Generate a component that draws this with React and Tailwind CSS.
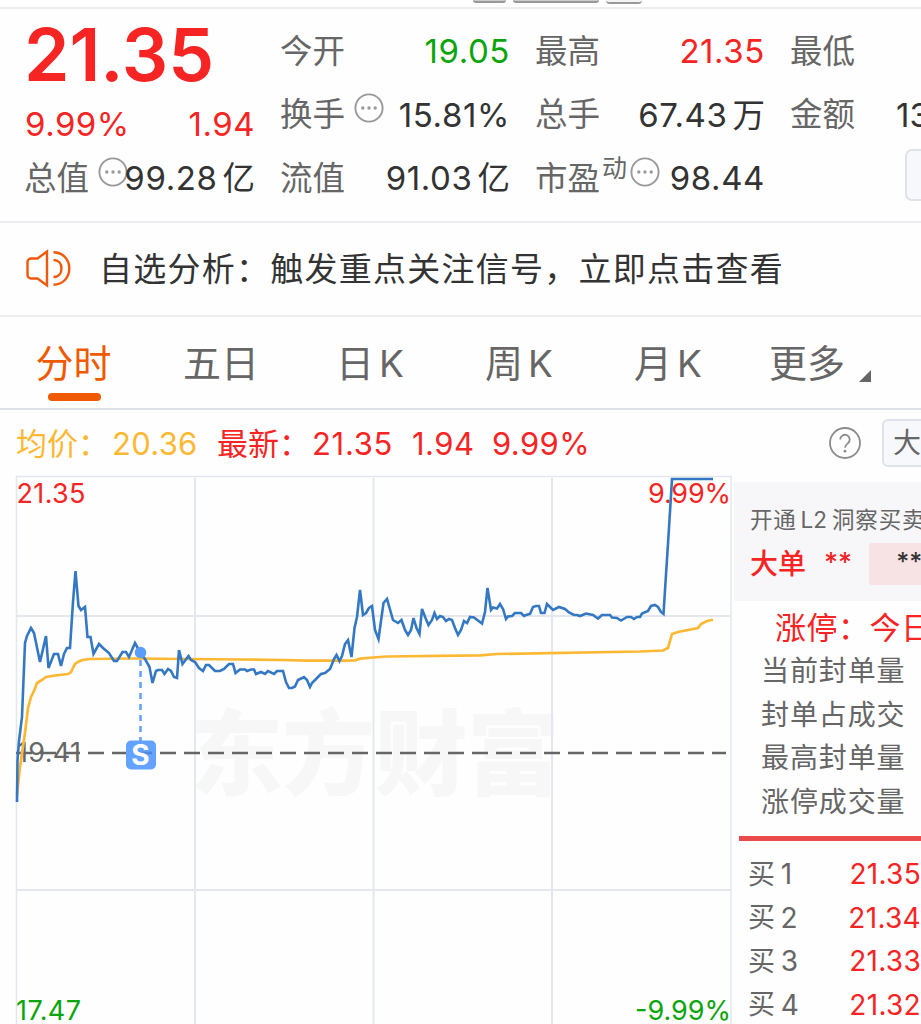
import React from "react";

const priceLine =
  "17,802 17.5,760 19,741 22,717 25,643 27,636 31,628 34,633 40,662 46,636 48.5,668 54,654 58,654 61,666 64,654 67,648 70,648 73,602 75.5,571 78.5,606 81,610 85,607 87.5,637 90.5,637 93.5,654 99,644 103,648 109,653 114,661 117,661 122.5,652 126,652 129,657 135,643 140.5,653 145,659 149.5,667 152.5,683 156,671 158,670 162,670 164.5,674 168,669 171,671 174,677 177,678 179,650 182.5,664 188.5,656 191,660 195,662 199,668 203,671 206,665 209,665 215,671 220,671 224,669 229,664 233,664 235.5,673 240,669.5 245,669.5 247,671 251,669.5 254,669.5 256,674 261,672 265,674 268,671 274,674 277,671 283,671 286,682 289,688 292,688 295,686.5 298,680 304,677 307,680 310,687 312,683 321,674 325,673 330,669 334,659 336.5,655 339.5,661 342,656 345,644 348,640 351.5,657 354.5,628 357,617 360,590 363,615 366,613 369,608 372,606 375,630 378.5,639 383.5,603 387,599 393,620 398,623 401.5,620 405,630 408,635 411,630 413.5,618 416.5,628 419.5,634 422,609 425.5,618 428.5,625 432,620 434.5,613 437,619 440,616 443,617 446,621 449,619 452,620 455,628 458,635 461,630 464,621 467,623 470,617 474,617.5 482,623.5 485,612 487.5,588 491,610 493,607.5 497,608.5 500,604 503,609 506,619 508,616.5 512,616 515,613 521,613 524,616 526,615 530,614 533,607 536,606 539,606 541,613 544.5,613 547,604 553,610 559,607 565,609 569,612.5 574,615 577,615 580,616 586,613.5 593,615 598,618.5 602,615 610,615 612,617.5 617,618 621,620.5 627,617 631,617 634,619 637,617 640,617 642,613.5 648,611 651,606 655,605 658,607 661,612 663.5,614 665,590 668.5,536 672,479 713,479";

const averageLine =
  "17,795 18,785 20,767 25,733 28,708 31,697 34,691 37,683 41,680.5 46,677 55,675.5 68,674 71,672 75,664 78,662 82,660 90,659 133,658.5 240,659.5 283,660 307,660.7 345,660.7 355,660.3 360,658.7 373,657.5 387,656.5 480,655.3 497,654 640,651.5 663,650.5 668,648 672,634 678,632 698,628 701,624 707,621 713,619.7";

function MoreDots({ className = "" }) {
  return (
    <svg viewBox="0 0 30 30" className={`size-[30px] shrink-0 ${className}`}>
      <circle cx="15" cy="15" r="13.6" fill="none" stroke="#999" strokeWidth="1.9" />
      <circle cx="8.8" cy="15" r="1.7" fill="#999" />
      <circle cx="15" cy="15" r="1.7" fill="#999" />
      <circle cx="21.2" cy="15" r="1.7" fill="#999" />
    </svg>
  );
}

function Stat({ label, value, mark, unit, className = "text-[#333]", extra }) {
  return (
    <div className="flex h-[63.5px] items-center whitespace-nowrap leading-none">
      <span className="-ml-px text-[32.5px] text-[#666]">{label}</span>
      {mark && <span className="ml-[2px] mb-5 text-[25px] text-[#666]">{mark}</span>}
      {extra}
      {value && (
        <span className={`-mr-px ml-auto text-[33px] tracking-[0.6px] ${className}`}>
          {value}
          {unit && <span className="ml-[5px] text-[32.500px] tracking-normal">{unit}</span>}
        </span>
      )}
    </div>
  );
}

function Summary() {
  return (
    <section className="flex h-[214px] shrink-0 gap-[27px] border-b-2 border-[#ededf1] pl-[25px]">
      <div className="flex w-[229px] shrink-0 flex-col leading-none">
        <div className="-ml-px mt-[8px] flex h-[74px] items-center text-[73px] font-semibold text-[#f72424]">
          21.35
        </div>
        <div className="mt-[15px] flex h-[36px] items-center justify-between text-[33px] tracking-[0.5px] text-[#f72424]">
          <span>9.99%</span>
          <span className="-mr-px">1.94</span>
        </div>
        <div className="mt-[5px]">
          <Stat
            label="总值"
            value="99.28"
            unit="亿"
            extra={<MoreDots className="-mr-10 mb-[14px] ml-[9px]" />}
          />
        </div>
      </div>
      <div className="w-[228px] shrink-0 pt-[11px]">
        <Stat label="今开" value="19.05" className="text-[#0aa50a]" />
        <Stat label="换手" value="15.81%" extra={<MoreDots className="mb-[15px] ml-[9px]" />} />
        <Stat label="流值" value="91.03" unit="亿" />
      </div>
      <div className="w-[228px] shrink-0 pt-[11px]">
        <Stat label="最高" value="21.35" className="text-[#f72424]" />
        <Stat label="总手" value="67.43" unit="万" />
        <Stat
          label="市盈"
          mark="动"
          value="98.44"
          extra={<MoreDots className="mb-[14px] ml-[3px]" />}
        />
      </div>
      <div className="w-[228px] shrink-0 pt-[11px]">
        <Stat label="最低" />
        <div className="flex h-[63.500px] items-center whitespace-nowrap leading-none">
          <span className="-ml-px w-[106px] text-[32.500px] text-[#666]">金额</span>
          <span className="text-[33px] text-[#333]">13</span>
        </div>
        <div className="ml-[114px] mt-[2px] h-[52px] w-[100px] rounded-[7px] border-2 border-[#dfe2e8] bg-[#f7f8fb]" />
      </div>
    </section>
  );
}

function Notice() {
  return (
    <section className="flex h-[94px] shrink-0 items-center border-b-2 border-[#ededf1] pl-[25px] leading-none">
      <svg viewBox="0 0 48 42" className="h-[42px] w-[48px] shrink-0 text-[#ef5a0a]">
        <g fill="none" stroke="currentColor" strokeWidth="2.4">
          <path d="M22 3.5 12.500 10.500H6a3.5 3.5 0 0 0-3.5 3.5v13A3.5 3.5 0 0 0 6 30.500h6.500L22 37.500Z" />
          <path d="M28.500 4.300C37.800 4.300 44.300 11.500 44.300 20.500S37.800 36.700 28.500 36.700" />
          <path d="M28.500 12C33.500 12 36.500 15.500 36.500 20.500S33.500 29 28.500 29" />
        </g>
      </svg>
      <span className="ml-[26px] whitespace-nowrap text-[33px] tracking-[1.25px] text-[#333]">
        自选分析：触发重点关注信号，立即点击查看
      </span>
    </section>
  );
}

function Tabs() {
  return (
    <nav className="flex h-[93px] shrink-0 whitespace-nowrap border-b-2 border-[#dde0e6] text-[38px] leading-none text-[#666]">
      <div className="flex w-[148px] flex-col items-center text-[#ef5a00]">
        <span className="-ml-px mt-[27px]">分时</span>
        <span className="mt-[11px] h-[8px] w-[53px] rounded-[4px] bg-[#ef5a00]" />
      </div>
      <span className="mt-[27px] w-[146px] text-center">五日</span>
      <span className="mt-[27px] w-[152px] text-center">
        日<span className="ml-[5px] text-[37px]">K</span>
      </span>
      <span className="mt-[27px] w-[146px] text-center">
        周<span className="ml-[5px] text-[37px]">K</span>
      </span>
      <span className="mt-[27px] w-[152px] text-center">
        月<span className="ml-[5px] text-[37px]">K</span>
      </span>
      <span className="ml-[25px] mt-[27px]">更多</span>
      <svg viewBox="0 0 12 12" className="ml-[14px] mt-[53px] size-[12px]">
        <path d="M12 0V12H0Z" fill="#666" />
      </svg>
    </nav>
  );
}

function QuoteBar() {
  return (
    <div className="flex h-[65px] shrink-0 items-center whitespace-nowrap pl-4 pt-px text-[31px] leading-none text-[#f72424]">
      <span className="w-[96px] text-[#fdb833]">均价：</span>
      <span className="w-[105px] tracking-[0.3px] text-[#fdb833]">20.36</span>
      <span className="w-[95px]">最新：</span>
      <span className="w-[100px] tracking-[0.7px]">21.35</span>
      <span className="w-[80px] tracking-[0.5px]">1.94</span>
      <span className="tracking-[0.4px]">9.99%</span>
      <svg viewBox="0 0 34 34" className="ml-auto size-[34px] shrink-0">
        <circle cx="17" cy="17" r="15" fill="none" stroke="#8c8c8c" strokeWidth="1.8" />
        <path
          d="M12.300 13.500a4.700 4.700 0 1 1 7.600 3.700c-1.900 1.500-2.900 2.200-2.900 4.600"
          fill="none"
          stroke="#8c8c8c"
          strokeWidth="1.800"
        />
        <circle cx="17" cy="25.200" r="1.400" fill="#8c8c8c" />
      </svg>
      <div className="-mr-6 ml-[20px] flex h-[48px] w-[63px] shrink-0 items-center rounded-[6px] border-2 border-[#dfe2e8] bg-[#f7f8fb] pl-[9px] text-[28px] text-[#666]">
        大
      </div>
    </div>
  );
}

function Chart() {
  return (
    <svg viewBox="0 475 732 549" className="h-[549px] w-[732px] shrink-0">
      <text x="190" y="788" fontSize="93" fontWeight="900" fill="#f7f7f7" textLength="370">
        东方财富
      </text>
      <g stroke="#e4e8ee" strokeWidth="2">
        <path d="M16.500 476V1024M731 476V1024M16 476.500H732" strokeWidth="1.500" />
        <path d="M195 478V1024M373.500 478V1024M552 478V1024M17 616H731M17 890H731" />
      </g>
      <path d="M16 753H726" stroke="#666" strokeWidth="2.500" strokeDasharray="16 8" />
      <g fontSize="27">
        <text x="16.500" y="502.500" fill="#f72424" textLength="69">21.35</text>
        <text x="648" y="502.500" fill="#f72424" textLength="83">9.99%</text>
        <text x="17" y="762" fill="#666" textLength="64">19.41</text>
        <text x="16" y="1020" fill="#0aa50a" textLength="65">17.47</text>
        <text x="635" y="1020" fill="#0aa50a" textLength="96">-9.99%</text>
      </g>
      <polyline points={averageLine} fill="none" stroke="#fdb833" strokeWidth="2.700" />
      <polyline points={priceLine} fill="none" stroke="#3478c4" strokeWidth="2.600" />
      <path d="M140.500 660V742" stroke="#66a3fc" strokeWidth="2.600" strokeDasharray="6 5" />
      <circle cx="140.500" cy="652.500" r="5.800" fill="#5b9dfb" />
      <rect x="126" y="740.500" width="30" height="29" rx="5" fill="#63a3ff" />
      <path d="M136 753H152" stroke="#4a8be0" strokeWidth="2.500" />
      <text x="140.500" y="765" fontSize="28" fontWeight="700" fill="#fff" textAnchor="middle">S</text>
    </svg>
  );
}

const limitRows = ["当前封单量", "封单占成交", "最高封单量", "涨停成交量"];
const bids = [
  ["1", "21.35"],
  ["2", "21.34"],
  ["3", "21.33"],
  ["4", "21.32"],
];

function OrderPanel() {
  return (
    <aside className="min-w-0 flex-1 overflow-hidden whitespace-nowrap pl-[2px] pt-[7px] leading-none text-[#666]">
      <div className="h-[119px] bg-[#f7f7fa] pl-4 pt-[26px]">
        <div className="flex h-[24px] items-center text-[22.500px] tracking-[0.800px]">
          开通<span className="ml-1 mr-[5px] tracking-normal">L2</span>洞察买卖
        </div>
        <div className="mt-[11px] flex h-[42px] items-center">
          <span className="text-[28px] font-medium text-[#f72424]">大单</span>
          <span className="mb-1 ml-[18px] text-[27px] font-medium text-[#f72424]">**</span>
          <span className="ml-[17px] flex h-[42px] w-[90px] shrink-0 items-center rounded-[2px] bg-[#f7e2e4] pb-1 pl-[27px] text-[25px] font-medium text-[#333]">
            **
          </span>
        </div>
      </div>
      <div className="flex h-[48px] items-center pl-[41px] pt-1 text-[31px] tracking-[0.5px] text-[#f72424]">
        涨停：今日
      </div>
      <div className="pl-[27px]">
        {limitRows.map((label) => (
          <div key={label} className="flex h-[43.700px] items-center text-[28px] tracking-[0.900px]">
            {label}
          </div>
        ))}
      </div>
      <div className="ml-[5px] mt-[12.500px] h-[5px] bg-[#ea4a4c]" />
      <div className="pl-[14px] pt-[11.500px]">
        {bids.map(([level, price]) => (
          <div key={level} className="flex h-[43.400px] items-center text-[28px]">
            <span className="w-[33px] text-[27px]">买</span>
            <span className="w-[69px]">{level}</span>
            <span className="tracking-[0.3px] text-[#f72424]">{price}</span>
          </div>
        ))}
      </div>
    </aside>
  );
}

export default function App() {
  return (
    <main className="flex h-[1024px] w-[921px] flex-col overflow-hidden bg-[#fefefe] font-['Inter','Noto_Sans_CJK_SC',sans-serif]">
      <div className="flex h-[9px] shrink-0 items-start gap-[7px] border-b-2 border-[#ededed] pl-[473px]">
        <div className="h-[3px] w-[33px] rounded-b-[6px] border-b-2 border-[#999] bg-[#ccc]" />
        <div className="h-[3px] w-[86px] rounded-b-[6px] border-b-2 border-[#999] bg-[#ccc]" />
        <div className="h-[4px] w-[36px] rounded-b-[6px] border-b-2 border-[#999] bg-[#f4f4f4]" />
      </div>
      <Summary />
      <Notice />
      <Tabs />
      <QuoteBar />
      <div className="flex min-h-0 flex-1">
        <Chart />
        <OrderPanel />
      </div>
    </main>
  );
}
